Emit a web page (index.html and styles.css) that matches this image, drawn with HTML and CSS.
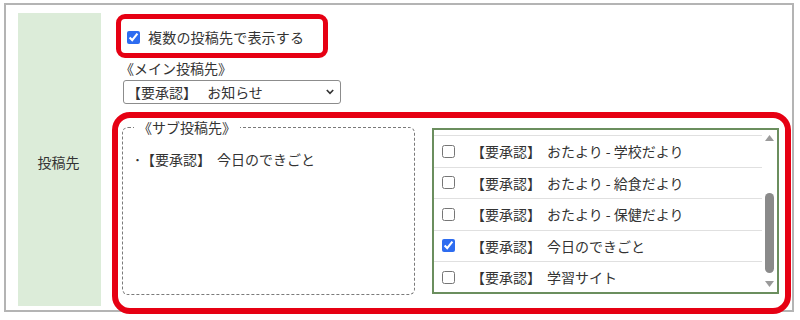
FILE: index.html
```html
<!DOCTYPE html>
<html lang="ja">
<head>
<meta charset="utf-8">
<link rel="stylesheet" href="styles.css">
</head>
<body>
<div class="page">
  <div class="frame">
    <div class="label-cell">投稿先</div>
    <div class="content">
      <label class="multi-row">
        <input type="checkbox" class="cb" checked>
        <span>複数の投稿先で表示する</span>
      </label>
      <div class="main-caption">《メイン投稿先》</div>
      <div class="select-wrap">
        <select class="main-select">
          <option>【要承認】　 お知らせ</option>
        </select>
        <svg class="chev" width="8" height="6" viewBox="0 0 8 6"><path d="M0.8 1 L4 4.4 L7.2 1" fill="none" stroke="#333" stroke-width="1.6"/></svg>
      </div>
      <div class="sub-area">
        <fieldset class="sub-box">
          <legend class="sub-legend">《サブ投稿先》</legend>
          <div class="sub-item"><span class="dot">･</span><span class="tag">【要承認】</span><span>今日のできごと</span></div>
        </fieldset>
        <div class="list-box">
          <div class="list-view">
            <div class="row-tail"></div>
            <div class="row"><input type="checkbox" class="cb"><span class="tag">【要承認】</span><span>おたより - 学校だより</span></div>
            <div class="row"><input type="checkbox" class="cb"><span class="tag">【要承認】</span><span>おたより - 給食だより</span></div>
            <div class="row"><input type="checkbox" class="cb"><span class="tag">【要承認】</span><span>おたより - 保健だより</span></div>
            <div class="row"><input type="checkbox" class="cb" checked><span class="tag">【要承認】</span><span>今日のできごと</span></div>
            <div class="row"><input type="checkbox" class="cb"><span class="tag">【要承認】</span><span>学習サイト</span></div>
          </div>
          <div class="scrollbar">
            <svg class="arrow" width="9" height="6" viewBox="0 0 9 6"><path d="M0 6 L4.5 0 L9 6 Z" fill="#9a9a9a"/></svg>
            <div class="track"><div class="thumb"></div></div>
            <svg class="arrow" width="9" height="6" viewBox="0 0 9 6"><path d="M0 0 L4.5 6 L9 0 Z" fill="#9a9a9a"/></svg>
          </div>
        </div>
      </div>
    </div>
  </div>
  <div class="mark mark-top"></div>
  <div class="mark mark-bottom"></div>
</div>
</body>
</html>
```
FILE: styles.css
```css
html, body {
  margin: 0;
  padding: 0;
  background: #ffffff;
}
body {
  font-family: "Noto Sans CJK JP", "Noto Sans", sans-serif;
  font-size: 14px;
  color: #333333;
}
.page {
  position: relative;
  width: 800px;
  height: 320px;
  overflow: hidden;
}
.frame {
  box-sizing: border-box;
  margin: 3px 0 0 4px;
  width: 790px;
  height: 309px;
  border: 2px solid #b4b4b4;
  padding: 8px 12px 4px 12px;
  display: flex;
  gap: 21px;
}
.label-cell {
  width: 83px;
  background: #dcecd9;
  display: flex;
  align-items: center;
  justify-content: center;
  padding: 4px 2px 0 0;
  box-sizing: border-box;
  line-height: 20px;
}
.content {
  display: flex;
  flex-direction: column;
  flex: 1;
}
.cb {
  width: 13px;
  height: 13px;
  margin: 0;
  accent-color: #2d6cf0;
  flex: none;
}
.multi-row {
  display: flex;
  align-items: center;
  height: 20px;
  margin-top: 14px;
  padding-left: 5px;
  gap: 8px;
  line-height: 20px;
  letter-spacing: 0.2px;
}
.main-caption {
  margin-top: 11px;
  line-height: 20px;
  height: 20px;
  margin-left: -2px;
}
.select-wrap {
  position: relative;
  margin-top: 2px;
  margin-left: 1px;
  width: 218px;
  height: 24px;
}
.main-select {
  appearance: none;
  -webkit-appearance: none;
  box-sizing: border-box;
  width: 100%;
  height: 24px;
  border: 1px solid #8c8c8c;
  border-radius: 3px;
  background: #ffffff;
  font-family: inherit;
  font-size: 14px;
  color: #333333;
  padding: 0 0 0 3px;
  margin: 0;
  line-height: 22px;
}
.chev {
  position: absolute;
  right: 7px;
  top: 9px;
}
.sub-area {
  display: flex;
  align-items: flex-start;
  gap: 17px;
  margin-top: 13px;
}
.sub-box {
  box-sizing: border-box;
  width: 293px;
  height: 178px;
  margin: 0;
  padding: 12px 10px 0 12px;
  border: 1px dashed #7a7a7a;
  border-radius: 6px;
  min-width: 0;
}
.sub-legend {
  padding: 0 4px;
  margin-left: -1px;
  line-height: 20px;
  height: 20px;
}
.sub-item {
  display: flex;
  align-items: center;
  line-height: 20px;
  margin-left: -1px;
}
.dot {
  margin-right: 0;
}
.tag {
  margin-right: 6px;
}
.list-box {
  box-sizing: border-box;
  width: 347px;
  height: 166px;
  margin-top: 11px;
  border: 2px solid #6b8e5e;
  display: flex;
}
.list-view {
  flex: 1;
  overflow: hidden;
}
.row-tail {
  box-sizing: border-box;
  height: 6px;
  border-bottom: 1px solid #e0e0e0;
}
.row {
  box-sizing: border-box;
  height: 31.5px;
  border-bottom: 1px solid #e0e0e0;
  display: flex;
  align-items: center;
  padding-left: 8px;
  line-height: 20px;
}
.row .cb {
  margin-right: 16px;
}
.scrollbar {
  width: 15px;
  display: flex;
  flex-direction: column;
  align-items: center;
  padding: 5px 0 5px 0;
  box-sizing: border-box;
  background: #ffffff;
}
.arrow {
  flex: none;
}
.track {
  flex: 1;
  width: 9px;
  position: relative;
}
.thumb {
  position: absolute;
  left: 0;
  top: 52px;
  width: 9px;
  height: 80px;
  border-radius: 5px;
  background: #8a8a8a;
}
.mark {
  position: absolute;
  box-sizing: border-box;
  border-style: solid;
  border-color: #e60013;
}
.mark-top {
  left: 116px;
  top: 14px;
  width: 212px;
  height: 44px;
  border-width: 5px;
  border-radius: 9px;
}
.mark-bottom {
  left: 112px;
  top: 112px;
  width: 679px;
  height: 202px;
  border-width: 6px;
  border-radius: 18px;
}
```
